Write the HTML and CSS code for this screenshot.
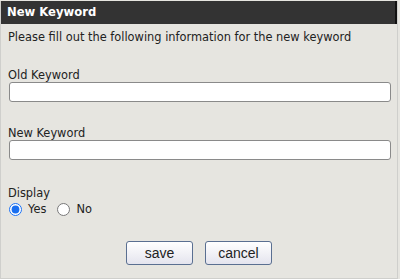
FILE: index.html
```html
<!DOCTYPE html>
<html>
<head>
<meta charset="utf-8">
<link rel="stylesheet" href="styles.css">
</head>
<body>
<div class="dialog">
  <div class="title">New Keyword</div>
  <div class="content">
    <p class="intro">Please fill out the following information for the new keyword</p>
    <div class="field f1">
      <label class="label" for="old">Old Keyword</label>
      <input class="text" id="old" type="text">
    </div>
    <div class="field f2">
      <label class="label" for="new">New Keyword</label>
      <input class="text" id="new" type="text">
    </div>
    <div class="field f3">
      <div class="label">Display</div>
      <div class="radios">
        <label class="opt"><input type="radio" name="d" checked> Yes</label>
        <label class="opt"><input type="radio" name="d"> No</label>
      </div>
    </div>
    <div class="buttons">
      <button class="btn">save</button>
      <button class="btn">cancel</button>
    </div>
  </div>
</div>
</body>
</html>
```
FILE: styles.css
```css
html, body {
  margin: 0;
  padding: 0;
  background: #e6e5e0;
}
body {
  font-family: "DejaVu Sans", Verdana, sans-serif;
  font-size: 11.4px;
  color: #222;
}
.dialog {
  width: 398px;
  height: 278px;
  border-left: 1px solid #cfcfcc;
  border-right: 1px solid #cfcfcc;
  border-bottom: 1px solid #cfcfcc;
  box-sizing: border-box;
}
.title {
  margin-top: 1px;
  height: 23px;
  background: #333333;
  color: #fff;
  font-weight: bold;
  font-size: 11.6px;
  line-height: 23px;
  padding-left: 6px;
  border-right: 2px solid #111;
}
.content {
  padding: 0 7px;
}
.intro {
  margin: 5px 0 0;
  line-height: 16px;
}
.field.f1 { margin-top: 23px; }
.field.f2 { margin-top: 24px; }
.field.f3 { margin-top: 26px; }
.label {
  display: block;
  line-height: 14px;
}
.text {
  display: block;
  box-sizing: border-box;
  width: 382px;
  height: 20px;
  margin: 0 0 0 1px;
  border: 1px solid #8a8a8a;
  border-radius: 3px;
  background: #fff;
}
.radios {
  display: flex;
  gap: 10px;
  margin-top: 2px;
  line-height: 14px;
}
.opt {
  display: flex;
  align-items: center;
  gap: 6px;
}
.opt input {
  margin: 0 0 0 1px;
  width: 13px;
  height: 13px;
  accent-color: #1a6ff0;
}
.buttons {
  display: flex;
  justify-content: center;
  gap: 12px;
  margin-top: 25px;
}
.btn {
  width: 67px;
  height: 24px;
  font-family: "Liberation Sans", Arial, sans-serif;
  font-size: 14px;
  color: #222;
  border: 1px solid #5a6f91;
  border-radius: 3px;
  background: linear-gradient(#ffffff, #e4e4ee);
  padding: 0;
}
```
